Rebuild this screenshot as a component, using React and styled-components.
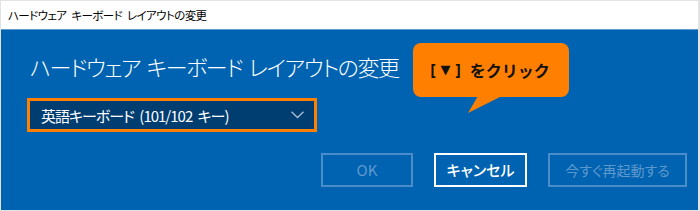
import React from "react";
import styled, { createGlobalStyle } from "styled-components";

const Global = createGlobalStyle`
  html, body { margin: 0; padding: 0; background: #ffffff; }
  body { font-family: "Noto Sans CJK JP", "Noto Sans", sans-serif; }
`;

const Frame = styled.div`
  position: relative;
  box-sizing: border-box;
  width: 700px;
  height: 211px;
  border-top: 1px solid #e3e3e3;
  border-left: 1px solid #e3e3e3;
  border-bottom: 1px solid #e3e3e3;
  border-right: 2px solid #e3e3e3;
  display: flex;
  flex-direction: column;
  overflow: hidden;
`;

const TitleBar = styled.div`
  height: 28px;
  flex: none;
  background: #ffffff;
  border-bottom: 1px solid #5f9bd0;
  display: flex;
  align-items: center;
  padding-left: 7px;
  font-size: 11.5px;
  color: #000;
  font-feature-settings: "palt";
  letter-spacing: -0.6px;
  word-spacing: 3px;
  white-space: pre;
`;

const Body = styled.div`
  flex: 1;
  background: #0063b1;
  display: flex;
  flex-direction: column;
  padding: 20px 11px 0 26px;
`;

const Heading = styled.h1`
  margin: 0 0 0 3px;
  font-size: 22px;
  line-height: 32px;
  font-weight: 300;
  color: #ffffff;
  font-feature-settings: "palt";
  letter-spacing: -1.4px;
  word-spacing: 3px;
`;

const Select = styled.div`
  margin-top: 16px;
  box-sizing: border-box;
  width: 290px;
  height: 34px;
  border: 3px solid #ff8000;
  background: #003d70;
  display: flex;
  align-items: center;
  justify-content: space-between;
  padding: 0 10px 0 11px;
  color: #ffffff;
  font-size: 15px;
  font-feature-settings: "palt";
  letter-spacing: -1px;
  word-spacing: 3px;
  white-space: pre;
`;

const Buttons = styled.div`
  margin-top: 21px;
  display: flex;
  justify-content: flex-end;
  gap: 21px;
`;

const Button = styled.div`
  box-sizing: border-box;
  height: 34px;
  width: ${(p) => p.$w}px;
  border: 2px solid ${(p) => (p.$disabled ? "#4b8dc8" : "#ffffff")};
  color: ${(p) => (p.$disabled ? "#5f98cd" : "#ffffff")};
  display: flex;
  align-items: center;
  justify-content: center;
  font-size: ${(p) => p.$fs || 15}px;
  font-weight: ${(p) => (p.$disabled ? 400 : 500)};
  font-feature-settings: "palt";
  padding-bottom: 1px;
`;

const Callout = styled.div`
  position: absolute;
  left: 412px;
  top: 42px;
  width: 156px;
  height: 54px;
  box-sizing: border-box;
  background: #ff8000;
  border-radius: 8px;
  display: flex;
  align-items: center;
  justify-content: center;
  color: #111111;
  font-size: 16px;
  font-weight: 700;
  padding: 0 2px 1px 0;
`;

const Bracket = styled.span`
  font-family: "Noto Sans", sans-serif;
  font-weight: 700;
`;

const Tri = styled.span`
  font-family: "DejaVu Sans", sans-serif;
  font-size: 13px;
  margin: 0 5px;
`;

const Label = styled.span`
  margin-left: 9px;
`;

const Tail = styled.svg`
  position: absolute;
  left: 55px;
  top: 53px;
  overflow: visible;
`;

export default function App() {
  return (
    <>
      <Global />
      <Frame>
        <TitleBar>ハードウェア キーボード レイアウトの変更</TitleBar>
        <Body>
          <Heading>ハードウェア キーボード レイアウトの変更</Heading>
          <Select>
            <span>英語キーボード (101/102 キー)</span>
            <svg width="13" height="8" viewBox="0 0 13 8">
              <polyline points="0.5,0.8 6.5,6.5 12.5,0.8" fill="none" stroke="#a9bfd6" strokeWidth="1.3" />
            </svg>
          </Select>
          <Buttons>
            <Button $disabled $w={92}>OK</Button>
            <Button $w={93}>キャンセル</Button>
            <Button $disabled $w={139} $fs={14}>今すぐ再起動する</Button>
          </Buttons>
        </Body>
        <Callout>
          <Bracket>[</Bracket>
          <Tri>▼</Tri>
          <Bracket>]</Bracket>
          <Label>をクリック</Label>
          <Tail width="40" height="20">
            <polygon points="10,0 34,0 0,17" fill="#ff8000" />
          </Tail>
        </Callout>
      </Frame>
    </>
  );
}
